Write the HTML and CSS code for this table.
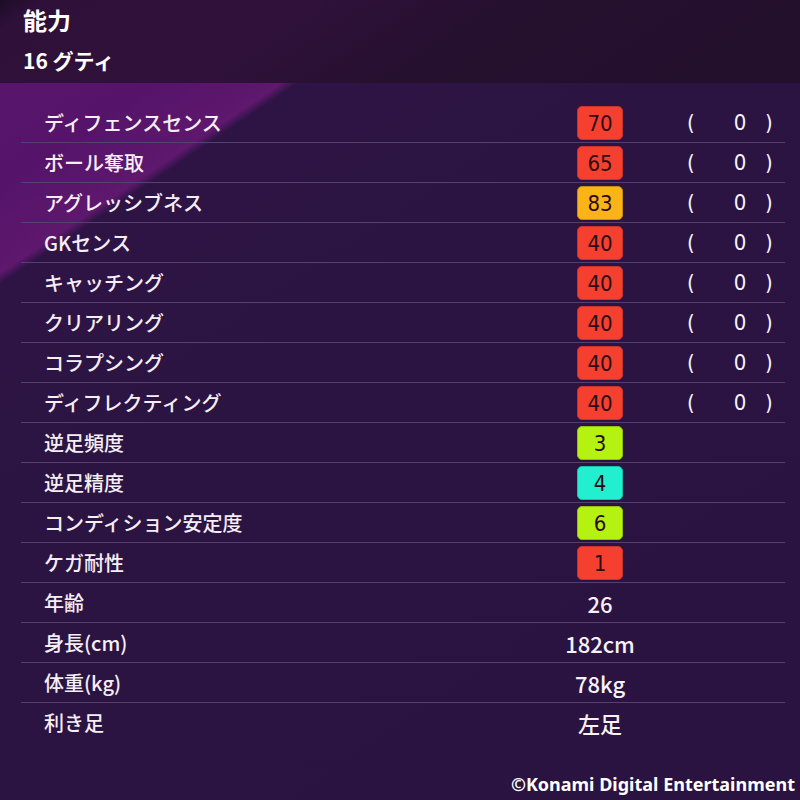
FILE: index.html
```html
<!DOCTYPE html>
<html lang="ja">
<head>
<meta charset="utf-8">
<title>能力</title>
<link rel="stylesheet" href="styles.css">
</head>
<body>
<div class="page">
  <header class="head">
    <h1 class="title">能力</h1>
    <div class="player">16 グティ</div>
  </header>
  <div class="table">
    <div class="row"><span class="label">ディフェンスセンス</span><span class="val"><span class="badge red">70</span></span><span class="paren"><span class="po">(</span><span class="pn">0</span><span class="pc">)</span></span></div>
    <div class="row"><span class="label">ボール奪取</span><span class="val"><span class="badge red">65</span></span><span class="paren"><span class="po">(</span><span class="pn">0</span><span class="pc">)</span></span></div>
    <div class="row"><span class="label">アグレッシブネス</span><span class="val"><span class="badge orange">83</span></span><span class="paren"><span class="po">(</span><span class="pn">0</span><span class="pc">)</span></span></div>
    <div class="row"><span class="label">GKセンス</span><span class="val"><span class="badge red">40</span></span><span class="paren"><span class="po">(</span><span class="pn">0</span><span class="pc">)</span></span></div>
    <div class="row"><span class="label">キャッチング</span><span class="val"><span class="badge red">40</span></span><span class="paren"><span class="po">(</span><span class="pn">0</span><span class="pc">)</span></span></div>
    <div class="row"><span class="label">クリアリング</span><span class="val"><span class="badge red">40</span></span><span class="paren"><span class="po">(</span><span class="pn">0</span><span class="pc">)</span></span></div>
    <div class="row"><span class="label">コラプシング</span><span class="val"><span class="badge red">40</span></span><span class="paren"><span class="po">(</span><span class="pn">0</span><span class="pc">)</span></span></div>
    <div class="row"><span class="label">ディフレクティング</span><span class="val"><span class="badge red">40</span></span><span class="paren"><span class="po">(</span><span class="pn">0</span><span class="pc">)</span></span></div>
    <div class="row"><span class="label">逆足頻度</span><span class="val"><span class="badge lime">3</span></span><span class="paren"></span></div>
    <div class="row"><span class="label">逆足精度</span><span class="val"><span class="badge teal">4</span></span><span class="paren"></span></div>
    <div class="row"><span class="label">コンディション安定度</span><span class="val"><span class="badge lime">6</span></span><span class="paren"></span></div>
    <div class="row"><span class="label">ケガ耐性</span><span class="val"><span class="badge red">1</span></span><span class="paren"></span></div>
    <div class="row"><span class="label">年齢</span><span class="val"><span class="plain">26</span></span><span class="paren"></span></div>
    <div class="row"><span class="label">身長(cm)</span><span class="val"><span class="plain">182cm</span></span><span class="paren"></span></div>
    <div class="row"><span class="label">体重(kg)</span><span class="val"><span class="plain">78kg</span></span><span class="paren"></span></div>
    <div class="row last"><span class="label">利き足</span><span class="val"><span class="plain">左足</span></span><span class="paren"></span></div>
  </div>
  <footer class="copy">©Konami Digital Entertainment</footer>
</div>
</body>
</html>
```

FILE: styles.css
```css
html, body {
  margin: 0;
  padding: 0;
}
body {
  width: 800px;
  height: 800px;
  overflow: hidden;
  background: #2a1340;
  font-family: "Noto Sans CJK JP", "Noto Sans", sans-serif;
  color: #f5eef5;
}
.page {
  width: 800px;
  height: 800px;
  display: flex;
  flex-direction: column;
  background: linear-gradient(146deg, #5a166c 0%, #55146a 14%, #5e186d 20.4%, #2e1445 21.2%, #2b1442 40%, #2a1340 100%);
}
.head {
  height: 83px;
  box-sizing: border-box;
  padding: 4px 0 0 23px;
  background: linear-gradient(146deg, #1e0c27 0%, #2f1039 5%, #2f113a 35%, #26102f 55%, #22102d 100%);
}
.title {
  margin: 0;
  font-size: 24px;
  line-height: 32px;
  font-weight: 700;
  color: #ffffff;
}
.player {
  margin-top: 9px;
  font-size: 21px;
  line-height: 30px;
  font-weight: 700;
  color: #ffffff;
}
.table {
  margin: 20px 15px 0 21px;
  display: flex;
  flex-direction: column;
}
.row {
  height: 39px;
  border-bottom: 1px solid #56406e;
  display: grid;
  grid-template-columns: 556px 46px 1fr;
  align-items: center;
}
.row.last {
  border-bottom-color: transparent;
}
.label {
  padding-left: 23px;
  font-size: 20px;
  line-height: 28px;
  font-weight: 500;
  white-space: nowrap;
  color: #f5eef5;
}
.val {
  display: flex;
  justify-content: center;
  white-space: nowrap;
}
.badge {
  width: 46px;
  height: 34px;
  border-radius: 5px;
  display: flex;
  align-items: center;
  justify-content: center;
  font-family: "DejaVu Sans Condensed", "DejaVu Sans", sans-serif;
  font-size: 22px;
  color: #2a0c14;
  box-sizing: border-box;
  margin-top: 1px;
}
.red { background: #f5402f; border: 1px solid #c7322a; }
.orange { background: #fbb418; border: 1px solid #c88a10; }
.lime { background: #b5f211; border: 1px solid #8fbf10; }
.teal { background: #22efcf; border: 1px solid #1bbfa6; }
.plain {
  font-size: 22px;
  line-height: 28px;
  font-weight: 500;
  color: #f7f2f7;
}
.paren {
  display: flex;
  align-items: center;
  padding-left: 64px;
  font-family: "DejaVu Sans Condensed", "DejaVu Sans", sans-serif;
  font-size: 22px;
  color: #f7f2f7;
}
.po { width: 40px; }
.pn { width: 26px; text-align: center; }
.pc { margin-left: 12px; }
.copy {
  margin-top: auto;
  padding: 0 5px 4px 0;
  text-align: right;
  font-family: "Noto Sans", sans-serif;
  font-weight: 700;
  font-size: 18px;
  line-height: 24px;
  color: #ffffff;
}
```
